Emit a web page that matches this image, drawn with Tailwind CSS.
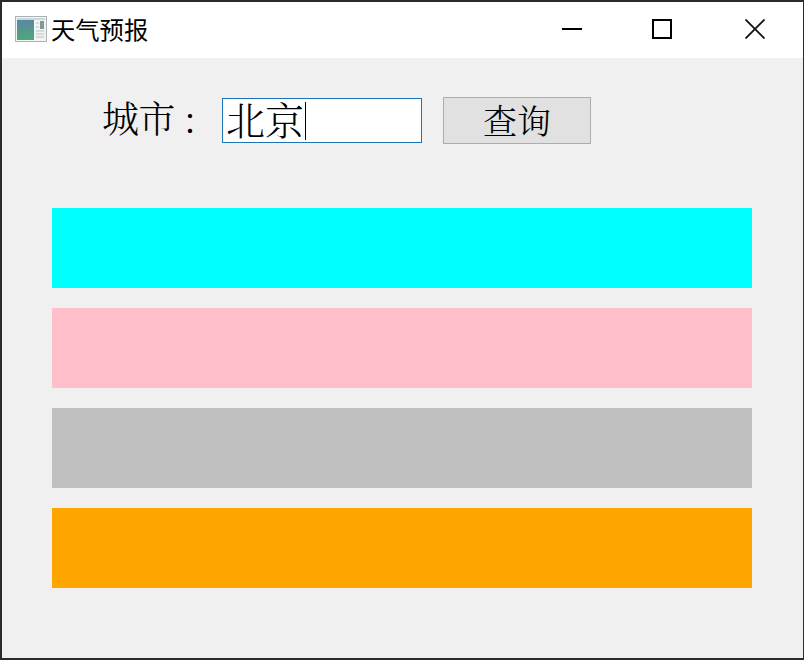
<!DOCTYPE html>
<html lang="zh">
<head>
    <meta charset="UTF-8">
    <title>天气预报</title>
    <script src="https://cdn.jsdelivr.net/npm/@tailwindcss/browser@4"></script>
</head>
<body class="w-[804px] h-[660px] overflow-hidden bg-[#f0f0f0]">
    <div class="w-full h-full flex flex-col border-2 border-[#2b2b2b] border-r-[1px] bg-[#f0f0f0]">
        <!-- title bar -->
        <div class="h-[56px] bg-white flex items-center shrink-0 pb-[2px]">
            <svg class="ml-[13px] w-[32px] h-[26px] shrink-0" viewBox="0 0 32 26">
                <defs>
                    <linearGradient id="pane" x1="0" y1="0" x2="0" y2="1">
                        <stop offset="0" stop-color="#5b87a5"/>
                        <stop offset="1" stop-color="#4fa878"/>
                    </linearGradient>
                </defs>
                <rect x="0.5" y="0.5" width="31" height="25" fill="#f2f4f4" stroke="#a9b2b5"/>
                <rect x="2" y="2" width="28" height="2" fill="#cfd6d8"/>
                <rect x="2" y="4" width="17" height="20" fill="url(#pane)"/>
                <rect x="25" y="5" width="4" height="8" fill="#7f9a90"/>
                <path d="M21 7h3M21 11h3M21 15h8M21 18h8M21 21h8" stroke="#b9bfc0" stroke-width="1"/>
            </svg>
            <span class="ml-[4px] text-[24.3px] leading-none text-black font-['Noto_Sans_CJK_SC',sans-serif]">天气预报</span>
            <div class="ml-auto flex items-center">
                <svg class="w-[20px] h-[20px] mr-[70px]" viewBox="0 0 20 20"><path d="M0 10h20" stroke="#000" stroke-width="2"/></svg>
                <svg class="w-[20px] h-[20px] mr-[73px]" viewBox="0 0 20 20"><rect x="1" y="1" width="18" height="18" fill="none" stroke="#000" stroke-width="2"/></svg>
                <svg class="w-[20px] h-[20px] mr-[38px]" viewBox="0 0 20 20"><path d="M0.5 0.5l19 19M19.5 0.5l-19 19" stroke="#111" stroke-width="1.8"/></svg>
            </div>
        </div>
        <!-- query row -->
        <div class="h-[150px] shrink-0 flex items-start pl-[100px] pt-[39px] font-['Noto_Serif_CJK_SC','Liberation_Serif','Noto_Sans_CJK_SC',serif] font-light text-black">
            <span class="w-[120px] h-[47px] flex items-center text-[37px] leading-none tracking-[-0.5px] whitespace-pre pb-[6px]">城市 :</span>
            <div class="w-[200px] h-[45px] bg-white border border-[#1f74b5] flex items-center pl-[3px] text-[39px] leading-none mt-[1px]">
                <span class="pb-[4px]">北京</span><span class="w-px h-[38px] bg-black ml-px"></span>
            </div>
            <button class="ml-[21px] w-[148px] h-[47px] bg-[#e1e1e1] border border-[#adadad] text-[34px] leading-none pb-[2px]">查询</button>
        </div>
        <!-- weather rows -->
        <div class="flex flex-col gap-[20px] pl-[50px]">
            <div class="w-[700px] h-[80px] bg-[#00ffff]"></div>
            <div class="w-[700px] h-[80px] bg-[#ffc0cb]"></div>
            <div class="w-[700px] h-[80px] bg-[#c0c0c0]"></div>
            <div class="w-[700px] h-[80px] bg-[#ffa500]"></div>
        </div>
    </div>
</body>
</html>
